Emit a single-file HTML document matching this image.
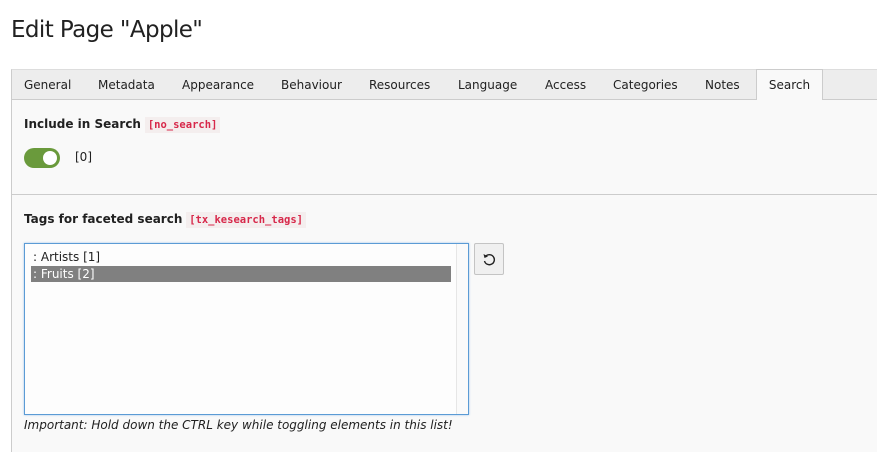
<!DOCTYPE html>
<html><head><style>
body{margin:0;width:877px;height:452px;background:#fff;font-family:"DejaVu Sans","Liberation Sans",sans-serif;font-size:12px;color:#212121;position:relative;overflow:hidden}
.abs{position:absolute}
h1{position:absolute;left:11px;top:17px;margin:0;font-size:23px;font-weight:normal;font-family:"DejaVu Sans",sans-serif;letter-spacing:-0.6px}
.tabs{left:11px;top:69px;width:866px;height:31px;background:#ededed;border-top:1px solid #ddd;border-left:1px solid #ccc;border-bottom:1px solid #ccc;box-sizing:border-box}
.tab{position:absolute;top:8px}
.active{left:744px;top:-1px;width:67px;height:32px;background:#f9f9f9;border:1px solid #ccc;border-bottom:none;box-sizing:border-box;padding-top:8px;text-align:center}
.panel{left:11px;top:100px;width:866px;height:352px;background:#f9f9f9;border-left:1px solid #ccc}
.code{font-family:"DejaVu Sans Mono","Liberation Mono",monospace;font-size:10.5px;color:#d7284a;background:#f4eeee;padding:2px 3px;font-weight:bold}
b{font-weight:bold}
</style></head><body>
<h1>Edit Page "Apple"</h1>
<div class="abs tabs">
<span class="tab" style="left:12px">General</span>
<span class="tab" style="left:86px">Metadata</span>
<span class="tab" style="left:170px">Appearance</span>
<span class="tab" style="left:269px">Behaviour</span>
<span class="tab" style="left:357px">Resources</span>
<span class="tab" style="left:446px">Language</span>
<span class="tab" style="left:533px">Access</span>
<span class="tab" style="left:601px">Categories</span>
<span class="tab" style="left:693px">Notes</span>
<div class="abs active">Search</div>
</div>
<div class="abs panel">
<div class="abs" style="left:12px;top:17px"><b>Include in Search</b> <span class="code">[no_search]</span></div>
<div class="abs" style="left:12px;top:48px;width:36px;height:20px;border-radius:10px;background:#6a9a3c"></div>
<div class="abs" style="left:31px;top:51px;width:14px;height:14px;border-radius:7px;background:#fff"></div>
<div class="abs" style="left:63px;top:50px">[0]</div>
<div class="abs" style="left:0;top:94px;width:866px;height:1px;background:#ccc"></div>
<div class="abs" style="left:12px;top:112px"><b>Tags for faceted search</b> <span class="code">[tx_kesearch_tags]</span></div>
<div class="abs" style="left:12px;top:143px;width:445px;height:172px;border:1px solid #5b9bd5;box-sizing:border-box;background:#fdfdfd;box-shadow:0 0 2px #9cc3ea">
<div class="abs" style="right:0;top:0;width:11px;height:170px;border-left:1px solid #e6e6e6;background:#fafafa"></div>
<div class="abs" style="left:8px;top:6px">: Artists [1]</div>
<div class="abs" style="left:6px;top:22px;width:420px;height:16px;background:#808080;color:#fff;padding-left:2px;box-sizing:border-box;line-height:16px">: Fruits [2]</div>
</div>
<div class="abs" style="left:462px;top:143px;width:30px;height:32px;border:1px solid #c4c4c4;box-sizing:border-box;background:#f0f0f0;border-radius:2px">
<svg width="28" height="30" viewBox="0 0 28 30"><path d="M10.5 12.5 A5 5 0 1 1 9.5 17" fill="none" stroke="#222" stroke-width="1.4"/><path d="M8.5 10 L9.5 14 L13 12.5 Z" fill="#222"/></svg>
</div>
<div class="abs" style="left:12px;top:318px;font-style:italic">Important: Hold down the CTRL key while toggling elements in this list!</div>
</div>
</body></html>
